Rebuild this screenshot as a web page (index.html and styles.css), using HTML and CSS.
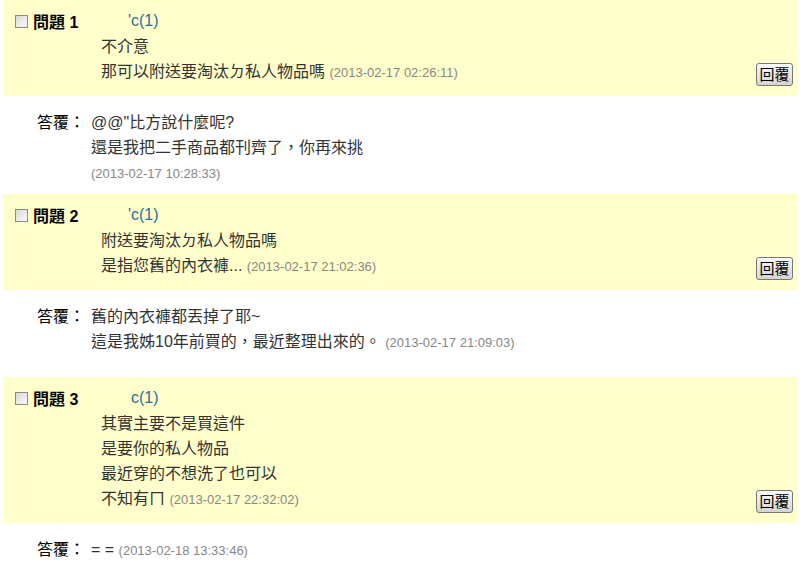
FILE: index.html
```html
<!DOCTYPE html>
<html lang="zh-Hant">
<head>
    <meta charset="UTF-8">
    <title>問與答</title>
    <link rel="stylesheet" href="styles.css">
</head>
<body>
    <div class="question">
        <div class="q-head">
            <input type="checkbox">
            <span class="q-title">問題 1</span>
            <span class="tick">'</span><a href="#" class="nick">c(1)</a>
        </div>
        <div class="q-body">
            <div class="q-text">
                不介意<br>
                那可以附送要淘汰ㄉ私人物品嗎 <span class="time">(2013-02-17 02:26:11)</span>
            </div>
            <button class="reply">回覆</button>
        </div>
    </div>
    <div class="answer">
        <span class="a-label">答覆：</span>
        <div class="a-text">
            @@"比方說什麼呢?<br>
            還是我把二手商品都刊齊了，你再來挑<br>
            <span class="time">(2013-02-17 10:28:33)</span>
        </div>
    </div>

    <div class="question">
        <div class="q-head">
            <input type="checkbox">
            <span class="q-title">問題 2</span>
            <span class="tick">'</span><a href="#" class="nick">c(1)</a>
        </div>
        <div class="q-body">
            <div class="q-text">
                附送要淘汰ㄉ私人物品嗎<br>
                是指您舊的內衣褲... <span class="time">(2013-02-17 21:02:36)</span>
            </div>
            <button class="reply">回覆</button>
        </div>
    </div>
    <div class="answer answer-tall">
        <span class="a-label">答覆：</span>
        <div class="a-text">
            舊的內衣褲都丟掉了耶~<br>
            這是我姊10年前買的，最近整理出來的。 <span class="time">(2013-02-17 21:09:03)</span>
        </div>
    </div>

    <div class="question">
        <div class="q-head">
            <input type="checkbox">
            <span class="q-title">問題 3</span>
            <span class="tick"></span><a href="#" class="nick">c(1)</a>
        </div>
        <div class="q-body">
            <div class="q-text">
                其實主要不是買這件<br>
                是要你的私人物品<br>
                最近穿的不想洗了也可以<br>
                不知有ㄇ <span class="time">(2013-02-17 22:32:02)</span>
            </div>
            <button class="reply">回覆</button>
        </div>
    </div>
    <div class="answer">
        <span class="a-label">答覆：</span>
        <div class="a-text">
            = = <span class="time">(2013-02-18 13:33:46)</span>
        </div>
    </div>
</body>
</html>
```

FILE: styles.css
```css
body {
    margin: 0;
    background: #fff;
    font-family: "Liberation Sans", "Noto Sans CJK TC", sans-serif;
    font-size: 16px;
    color: #333;
}
.question {
    background: #ffffcc;
    margin: 0 3px;
    padding: 8px 0 11px;
}
.q-head {
    display: flex;
    align-items: center;
    height: 26px;
    padding-left: 12px;
}
.q-head input {
    appearance: none;
    width: 13px;
    height: 13px;
    margin: 0 5px 0 0;
    border: 1px solid #8a8a8a;
    background: linear-gradient(135deg, #d8d8d8, #fbfbfb);
}
.q-title {
    width: 95px;
    font-weight: bold;
    color: #000;
}
.tick {
    display: inline-block;
    width: 3px;
    color: #2a6f99;
}
.nick {
    color: #2a6f99;
    text-decoration: none;
}
.q-body {
    display: flex;
    align-items: flex-end;
    justify-content: space-between;
    padding: 0 4px 0 98px;
    line-height: 25px;
}
.time {
    font-size: 13px;
    color: #888;
}
.reply {
    font-family: "Liberation Sans", "Noto Sans CJK TC", sans-serif;
    font-size: 15px;
    line-height: 18px;
    width: 37px;
    height: 23px;
    padding: 0;
    margin-bottom: -1px;
    color: #000;
    border: 1px solid #777;
    border-radius: 3px;
    background: linear-gradient(#fafafa, #d4d4d4);
}
.answer {
    display: flex;
    padding: 14px 0 8px 37px;
    line-height: 25px;
}
.answer-tall {
    padding-bottom: 22px;
}
.a-label {
    width: 54px;
    color: #000;
}
```
